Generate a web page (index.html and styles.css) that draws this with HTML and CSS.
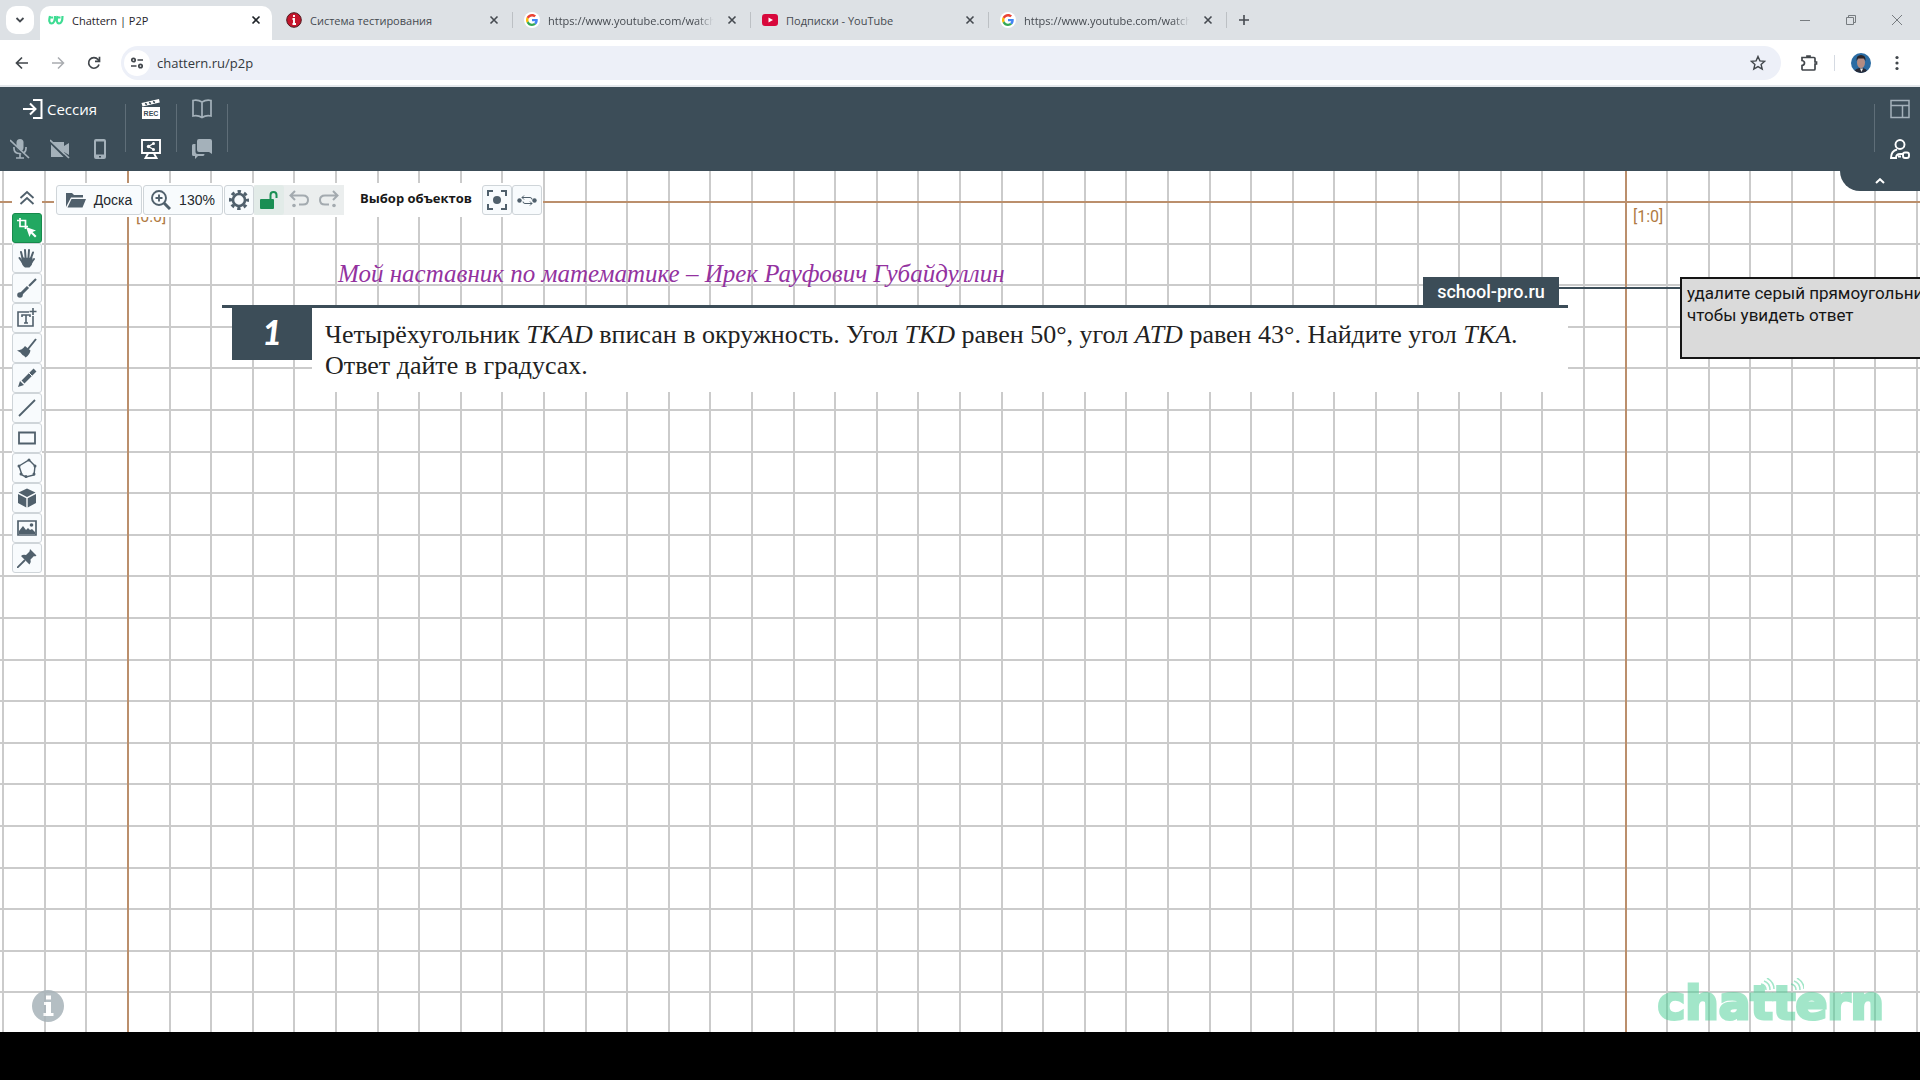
FILE: index.html
```html
<!DOCTYPE html>
<html lang="ru">
<head>
<meta charset="utf-8">
<title>Chattern | P2P</title>
<link rel="stylesheet" href="styles.css">
</head>
<body>
<svg class="defs" aria-hidden="true">
  <symbol id="x" viewBox="0 0 10 10"><path d="M1.5 1.5l7 7M8.5 1.5l-7 7" fill="none" stroke="currentColor" stroke-width="1.6"/></symbol>
  <symbol id="google" viewBox="0 0 48 48"><path fill="#ea4335" d="M24 9.5c3.5 0 6.700 1.200 9.200 3.600l6.900-6.900C35.900 2.400 30.500 0 24 0 14.600 0 6.500 5.400 2.600 13.200l8 6.200C12.400 13.700 17.700 9.500 24 9.500z"/><path fill="#4285f4" d="M47 24.500c0-1.600-.2-3.100-.4-4.500H24v9h12.900c-.6 3-2.300 5.500-4.800 7.200l7.700 6C44.400 38 47 31.800 47 24.500z"/><path fill="#fbbc05" d="M10.500 28.600c-.5-1.500-.8-3-.8-4.600s.3-3.100.8-4.600l-8-6.200C.9 16.500 0 20.100 0 24s.9 7.500 2.600 10.800z"/><path fill="#34a853" d="M24 48c6.500 0 11.900-2.100 15.900-5.800l-7.700-6c-2.200 1.500-4.900 2.300-8.200 2.300-6.300 0-11.600-4.200-13.500-9.900l-8 6.200C6.500 42.600 14.600 48 24 48z"/></symbol>
</svg>

<nav class="tabs" aria-label="Вкладки">
  <button class="tab-search" aria-label="Поиск вкладок"><svg width="10" height="10" viewBox="0 0 10 10"><path d="M1.500 3l3.500 3.500L8.500 3" fill="none" stroke="currentColor" stroke-width="1.800"/></svg></button>
  <div class="tab active">
    <svg class="fav" viewBox="0 0 16 16"><path d="M2 4q-2 7 1.500 7.500Q7 11.500 7 4M9.500 4q-2 7 1.500 7.500Q14.500 11.500 14.500 4M1 5.500h4M9 5.500h3.500" fill="none" stroke="#3fdc93" stroke-width="2.200"/></svg>
    <span class="tab-title">Chattern | P2P</span><button class="close" aria-label="Закрыть"><svg><use href="#x"/></svg></button>
  </div>
  <div class="tab">
    <svg class="fav" viewBox="0 0 16 16"><circle cx="8" cy="8" r="7.300" fill="#c4152c" stroke="#4e1a20"/><path d="M8 3v2M6.500 7H8v5M6.500 12h3.500" fill="none" stroke="#fff" stroke-width="1.900"/></svg>
    <span class="tab-title">Система тестирования</span><button class="close" aria-label="Закрыть"><svg><use href="#x"/></svg></button>
  </div>
  <div class="tab">
    <span class="fav round"><svg><use href="#google"/></svg></span>
    <span class="tab-title fade">https://www.youtube.com/watch</span><button class="close" aria-label="Закрыть"><svg><use href="#x"/></svg></button>
  </div>
  <div class="tab">
    <svg class="fav" viewBox="0 0 16 16"><rect y="2" width="16" height="12" rx="3" fill="#d8083c"/><path d="M6.500 5.500v5l4.500-2.500z" fill="#fff"/></svg>
    <span class="tab-title">Подписки - YouTube</span><button class="close" aria-label="Закрыть"><svg><use href="#x"/></svg></button>
  </div>
  <div class="tab">
    <span class="fav round"><svg><use href="#google"/></svg></span>
    <span class="tab-title fade">https://www.youtube.com/watch</span><button class="close" aria-label="Закрыть"><svg><use href="#x"/></svg></button>
  </div>
  <button class="new-tab" aria-label="Новая вкладка"><svg width="12" height="12" viewBox="0 0 12 12"><path d="M6 1v10M1 6h10" stroke="currentColor" stroke-width="1.600"/></svg></button>
  <div class="win">
    <button aria-label="Свернуть"><svg width="10" height="10" viewBox="0 0 10 10"><path d="M0 5.500h10" stroke="currentColor"/></svg></button>
    <button aria-label="Окно"><svg width="10" height="10" viewBox="0 0 10 10"><path d="M2.500 2V.5h7v7H8M.5 2.500h7v7h-7z" fill="none" stroke="currentColor"/></svg></button>
    <button aria-label="Закрыть окно"><svg width="10" height="10" viewBox="0 0 10 10"><path d="M0 0l10 10M10 0L0 10" stroke="currentColor"/></svg></button>
  </div>
</nav>

<div class="navbar">
  <button aria-label="Назад"><svg width="16" height="16" viewBox="0 0 16 16"><path d="M14 8H3M8 2.500L2.500 8 8 13.500" fill="none" stroke="currentColor" stroke-width="1.700"/></svg></button>
  <button class="off" aria-label="Вперёд"><svg width="16" height="16" viewBox="0 0 16 16"><path d="M2 8h11M8 2.500L13.500 8 8 13.500" fill="none" stroke="currentColor" stroke-width="1.500"/></svg></button>
  <button aria-label="Обновить"><svg width="16" height="16" viewBox="0 0 16 16"><path d="M13 9.500A5.300 5.300 0 1 1 12 4.500L13.500 6M13.500 1.800V6.300H9" fill="none" stroke="currentColor" stroke-width="1.700"/></svg></button>
  <div class="omnibox">
    <span class="site"><svg width="14" height="14" viewBox="0 0 14 14"><g fill="none" stroke="currentColor" stroke-width="1.700"><circle cx="3.500" cy="4" r="1.700"/><path d="M7.500 4H13M1 10h5.500"/><circle cx="10.500" cy="10" r="1.700"/></g></svg></span>
    <input class="url" aria-label="Адрес" value="chattern.ru/p2p">
    <button aria-label="Закладка"><svg width="16" height="16" viewBox="0 0 16 16"><path d="M8 1.500l1.900 4.400 4.800.4-3.600 3.100 1.100 4.700L8 11.600l-4.200 2.500 1.100-4.700L1.300 6.300l4.800-.4z" fill="none" stroke="currentColor" stroke-width="1.400"/></svg></button>
  </div>
  <div class="nav-right">
    <button aria-label="Расширения"><svg width="18" height="18" viewBox="0 0 18 18"><path d="M2 3.500h12q1 0 1 1v3.500h1.500v2H15v5q0 1-1 1H3q-1 0-1-1v-3.500q2.500-.5 2.500-2.500T2 6.500zM7 3.500V2h3v1.500" fill="none" stroke="currentColor" stroke-width="1.700"/></svg></button>
    <i></i>
    <button class="profile" aria-label="Профиль"><svg width="20" height="20" viewBox="0 0 20 20"><clipPath id="av"><circle cx="10" cy="10" r="10"/></clipPath><g clip-path="url(#av)"><path fill="#2b6ca3" d="M0 0h20v20H0z"/><path fill="#272b38" d="M2 20q2-5 8-5t7 5z"/><ellipse cx="10" cy="9.500" rx="4" ry="5.500" fill="#b48c82"/><path fill="#2a2529" d="M5.500 8Q5 2 10 2t4.500 6L13 5.500H7z"/><path fill="#eee" d="M9 15.500l1.500 3.500 1.500-3.500z"/></g></svg></button>
    <button aria-label="Меню"><svg width="4" height="16" viewBox="0 0 4 16"><g fill="currentColor"><circle cx="2" cy="2.500" r="1.600"/><circle cx="2" cy="8" r="1.600"/><circle cx="2" cy="13.500" r="1.600"/></g></svg></button>
  </div>
</div>

<header class="app">
  <div class="group session">
    <button class="enter"><svg class="ic" viewBox="0 0 20 20"><path d="M0 10h12M7 4.500l5.500 5.500L7 15.500M10 1h8.500v18H10" fill="none" stroke="currentColor" stroke-width="2"/></svg>Сессия</button>
    <div class="trio">
      <button class="dim" aria-label="Микрофон"><svg class="ic" viewBox="0 0 20 20"><rect x="6.500" y="0" width="7" height="12" rx="3.500" fill="currentColor"/><path d="M4 8v1.500q0 5 6 5t6-5V8M10 14v5M6 19h8" fill="none" stroke="currentColor" stroke-width="1.700"/><path d="M0 2l18 18" stroke="#3c4d58" stroke-width="2"/><path d="M0 1l19 18" stroke="currentColor" stroke-width="1.700"/></svg></button>
      <button class="dim" aria-label="Камера"><svg class="ic" viewBox="0 0 20 20"><path fill="currentColor" d="M1 3h13v4l5-3v12l-5-3v5H1z"/><path d="M0 3l17 17" stroke="#3c4d58" stroke-width="2"/><path d="M0 1l19 18" stroke="currentColor" stroke-width="1.700"/></svg></button>
      <button class="dim" aria-label="Телефон"><svg class="ic" viewBox="0 0 20 20"><path fill="currentColor" fill-rule="evenodd" d="M6 0h8q2 0 2 2v16q0 2-2 2H6q-2 0-2-2V2q0-2 2-2zm0 2.500v13h8v-13zM9 17v1.500h2V17z"/></svg></button>
    </div>
  </div>
  <div class="group">
    <button aria-label="Запись"><svg class="ic" viewBox="0 0 20 20"><path fill="currentColor" d="M.5 4L18 0l.8 3.500L1.500 7.500zM1 8h18v12H1z"/><path d="M4 4.500l2 1M8 3.500l2 1M12 2.500l2 1" stroke="#3c4d58" stroke-width="1.500"/><text class="rec" x="10" y="17" text-anchor="middle">REC</text></svg></button>
    <button aria-label="Демонстрация экрана"><svg class="ic" viewBox="0 0 20 20"><path d="M1 1h18v13H1zM7 14.500L4.500 19h11L13 14.500" fill="none" stroke="currentColor" stroke-width="1.900"/><path d="M12.500 4.500L7.500 7.500l5 3" fill="none" stroke="currentColor" stroke-width="1.300"/><g fill="currentColor"><circle cx="12.500" cy="4.500" r="1.500"/><circle cx="7.500" cy="7.500" r="1.700"/><circle cx="12.500" cy="10.500" r="1.500"/></g></svg></button>
  </div>
  <div class="group">
    <button class="dim" aria-label="Книга"><svg class="ic" viewBox="0 0 20 20"><path d="M10 3Q6 .5 1 1.500V17q5-1 9 1.500Q14 16 19 17V1.500Q14 .5 10 3zM10 3v15.500" fill="none" stroke="currentColor" stroke-width="1.700"/></svg></button>
    <button class="dim" aria-label="Чат"><svg class="ic" viewBox="0 0 20 20"><path fill="currentColor" d="M7 0h11q2 0 2 2v13l-3-2H7q-2 0-2-2V2q0-2 2-2zM1.500 5H3.500v8q0 2 2 2h7q0 2-1.500 2H6l-3 3v-3H1.500Q0 17 0 15.500v-9Q0 5 1.500 5z"/></svg></button>
  </div>
  <div class="group right">
    <button class="dim" aria-label="Макет"><svg class="ic" viewBox="0 0 20 20"><path d="M1 1.500h18v17H1zM1 6.500h18M12.500 6.500v12" fill="none" stroke="currentColor" stroke-width="1.500"/></svg></button>
    <button aria-label="Участник"><svg class="ic" viewBox="0 0 20 20"><g fill="none" stroke="currentColor" stroke-width="1.900"><circle cx="10" cy="5.500" r="4.500"/><path d="M7 19H1q0-7 6-8.500M6 19q0-4 4-4h4M11 17.500H8"/><rect x="13" y="13.500" width="6" height="5.500" rx="2"/></g></svg></button>
  </div>
  <button class="collapse" aria-label="Свернуть панель"><svg width="10" height="6" viewBox="0 0 10 6"><path d="M1 5l4-3.800L9 5" fill="none" stroke="currentColor" stroke-width="2"/></svg></button>
</header>

<main class="board">
  <div class="axis row"></div><div class="axis col first"></div><div class="axis col second"></div>
  <span class="coord c00">[0:0]</span><span class="coord c10">[1:0]</span>
  <p class="mentor">Мой наставник по математике – Ирек Рауфович Губайдуллин</p>
  <span class="brand-line"></span>
  <span class="brand">school-pro.ru</span>
  <article class="task">
    <div class="num">1</div>
    <p>Четырёхугольник <em>TKAD</em> вписан в окружность. Угол <em>TKD</em> равен 50°, угол <em>ATD</em> равен 43°. Найдите угол <em>TKA</em>.<br>Ответ дайте в градусах.</p>
  </article>
  <div class="answer">удалите серый прямоугольник,<br>чтобы увидеть ответ</div>

  <div class="tools-top">
    <button class="labelled folder"><svg class="ic" viewBox="0 0 20 20"><path fill="currentColor" d="M0 17V3h6l2 2h9v2.500H5zM1.500 17.500L5.500 9H20l-3.500 8.500z"/></svg>Доска</button>
    <button class="labelled zoom"><svg class="ic" viewBox="0 0 20 20"><g fill="none" stroke="currentColor" stroke-width="1.900"><circle cx="8" cy="8" r="7"/><path d="M8 4.500v7M4.500 8h7"/><path d="M13 13l6 6" stroke-width="3"/></g></svg>130%</button>
    <button aria-label="Настройки"><svg class="ic" viewBox="0 0 20 20"><g fill="none" stroke="currentColor"><circle cx="10" cy="10" r="6" stroke-width="2.600"/><circle cx="10" cy="10" r="8.500" stroke-width="3" stroke-dasharray="3.400 3.276" stroke-dashoffset="1.700"/></g></svg></button>
    <div class="flat">
      <button class="lock" aria-label="Замок"><svg class="ic" viewBox="0 0 20 20"><rect x="1" y="9" width="14" height="10" rx="1" fill="currentColor"/><path d="M11.500 9V5q0-3 3-3t3 3v3" fill="none" stroke="currentColor" stroke-width="2"/></svg></button>
      <button aria-label="Отменить"><svg class="ic" viewBox="0 0 20 20"><path d="M2 5.500h12q5 0 5 4.500t-5 4.500h-4M6 1L1.500 5.500 6 10" fill="none" stroke="currentColor" stroke-width="2"/><circle cx="5" cy="15.500" r="1.800" fill="currentColor"/></svg></button>
      <button aria-label="Повторить"><svg class="ic" viewBox="0 0 20 20"><path d="M18 5.500H6q-5 0-5 4.500t5 4.500h4M14 1l4.500 4.500L14 10" fill="none" stroke="currentColor" stroke-width="2"/><circle cx="15" cy="15.500" r="1.800" fill="currentColor"/></svg></button>
    </div>
    <strong>Выбор объектов</strong>
    <button aria-label="Фокус"><svg class="ic" viewBox="0 0 20 20"><path d="M1 6V1h5M14 1h5v5M19 14v5h-5M6 19H1v-5" fill="none" stroke="currentColor" stroke-width="2"/><circle cx="10" cy="10" r="4" fill="currentColor"/></svg></button>
    <button aria-label="Соединить"><svg class="ic" viewBox="0 0 20 20"><g fill="currentColor"><circle cx="2.500" cy="10.500" r="2.200"/><circle cx="17.500" cy="10.500" r="2.200"/></g><path d="M5 7.500h8q2 0 2 2M7 5.500L5 7.500 7 9.500M15 13.500H8q-2 0-2-2M13 11.500l2 2-2 2" fill="none" stroke="currentColor"/></svg></button>
  </div>

  <div class="tools-left">
    <button class="up" aria-label="Свернуть инструменты"><svg width="16" height="16" viewBox="0 0 16 16"><path d="M1.500 8L8 2l6.500 6M1.500 14L8 8l6.500 6" fill="none" stroke="currentColor" stroke-width="1.800"/></svg></button>
    <button class="on" aria-label="Выбор"><svg class="ic" viewBox="0 0 20 20"><path d="M3 0v8.500h8M0 2.500h8.500V11" fill="none" stroke="currentColor" stroke-width="1.700"/><path fill="currentColor" d="M9 9l10 3.500-3.500 1.500 4 4-1.500 1.500-4-4-1.500 3.500z"/></svg></button>
    <button aria-label="Рука"><svg class="ic" viewBox="0 0 20 20"><path d="M5.500 10L4 4M8.500 9L8 2M11.500 9L12 2M14 10l2-5.500M6 15l-3.500-5M14 15l3-4" stroke="currentColor" stroke-width="2" stroke-linecap="round"/><path fill="currentColor" d="M4.500 9.500h11V14q0 3-3 5.500H8Q4.500 17 4.500 13z"/></svg></button>
    <button aria-label="Кисть"><svg class="ic" viewBox="0 0 20 20"><path d="M19 1l-7 7" stroke="currentColor" stroke-width="2.200"/><path d="M11 9l-7 7" stroke="currentColor" stroke-width="3"/><circle cx="3" cy="17" r="2.800" fill="currentColor"/></svg></button>
    <button aria-label="Текст"><svg class="ic" viewBox="0 0 20 20"><path d="M12 4H1v14h15V8M16 0v7M12.500 3.500h7M5 9V7h8v2M9 7v8M7 15h4" fill="none" stroke="currentColor" stroke-width="1.600"/></svg></button>
    <button aria-label="Очистить"><svg class="ic" viewBox="0 0 20 20"><path d="M19 1l-8 10" stroke="currentColor" stroke-width="2"/><path fill="currentColor" d="M8 8l5.500 4.500q-1 4.500-5 7-1-2-3-2.500Q4 14 0 12.500 5.500 12 8 8z"/></svg></button>
    <button aria-label="Карандаш"><svg class="ic" viewBox="0 0 20 20"><path d="M18 2L6 14" stroke="currentColor" stroke-width="4"/><path fill="currentColor" d="M1 19l2-6 4 4z"/><path d="M12 5l3 3" stroke="#f7fafc"/></svg></button>
    <button aria-label="Линия"><svg class="ic" viewBox="0 0 20 20"><path d="M2 18L18 2" stroke="currentColor" stroke-width="1.800"/></svg></button>
    <button aria-label="Прямоугольник"><svg class="ic" viewBox="0 0 20 20"><path d="M2 4.500h16v11H2z" fill="none" stroke="currentColor" stroke-width="1.800"/></svg></button>
    <button aria-label="Многоугольник"><svg class="ic" viewBox="0 0 20 20"><path d="M2 8l10-6 6 6-1 9-8 2-4-2z" fill="none" stroke="currentColor" stroke-width="1.400"/><g fill="currentColor"><circle cx="2" cy="8" r="1.500"/><circle cx="12" cy="2" r="1.500"/><circle cx="18" cy="8" r="1.500"/><circle cx="17" cy="16" r="1.500"/><circle cx="9" cy="18.500" r="1.500"/><circle cx="4" cy="16" r="1.500"/></g></svg></button>
    <button aria-label="Куб"><svg class="ic" viewBox="0 0 20 20"><path fill="currentColor" d="M10 .5l8.500 4L10 9 1.500 4.500zM1 6l8.300 4.300V19.500L1 15zM19 6l-8.300 4.300V19.500L19 15z"/></svg></button>
    <button aria-label="Изображение"><svg class="ic" viewBox="0 0 20 20"><path d="M1 3h18v14H1z" fill="none" stroke="currentColor" stroke-width="1.700"/><path fill="currentColor" d="M2 16v-3l4-5 3 4 2-2 2 2 2-1 3 3v2z"/><circle cx="14.500" cy="7" r="1.800" fill="currentColor"/></svg></button>
    <button aria-label="Закрепить"><svg class="ic" viewBox="0 0 20 20"><path d="M0 20l8-8" stroke="currentColor" stroke-width="1.800"/><path fill="currentColor" d="M13 1l6.500 6.500-1.500 1-1-.500-3.500 3.500q1 3-1 5L4 8q2-2 5-1l3.500-3.500z"/></svg></button>
  </div>

  <button class="info" aria-label="Информация"><svg width="32" height="32" viewBox="0 0 32 32"><circle cx="16" cy="16" r="16" fill="#a8b3b9"/><path d="M14 5.500h5v4h-5zM12 12h7v11h2.500v3h-10v-3H14v-8h-2z" fill="#fff"/></svg></button>
  <div class="logo">chattern<svg width="44" height="14" viewBox="0 0 44 14"><path d="M1 6q5 1 5 6M4 3q6 2 6 9M7 0q7 4 7 11M31 6q5 1 5 6M34 3q6 2 6 9M37 0q7 4 7 11" fill="none" stroke="currentColor" stroke-width="1.500"/></svg></div>
</main>
<footer class="letterbox"></footer>
</body>
</html>
```
FILE: styles.css
```css
* { box-sizing: border-box; }
body {
  margin: 0;
  min-height: 100vh;
  display: flex;
  flex-direction: column;
  overflow: hidden;
  font-family: "Open Sans", "Noto Sans", sans-serif;
  color: #1f2429;
}
button {
  margin: 0;
  padding: 0;
  border: 0;
  background: none;
  color: inherit;
  font: inherit;
  display: flex;
  align-items: center;
  justify-content: center;
}
svg { display: block; }
p { margin: 0; }
.defs { position: absolute; width: 0; height: 0; }
.ic { width: 20px; height: 20px; flex: none; }

/* Browser tabs */
.tabs {
  height: 40px;
  padding-left: 6px;
  background: #dde1e5;
  display: flex;
  align-items: flex-end;
  color: #454a50;
}
.tab-search {
  width: 28px;
  height: 28px;
  margin: 0 6px 6px 0;
  border-radius: 10px;
  background: #fff;
}
.tab {
  width: 238px;
  height: 34px;
  padding: 0 12px 6px 11px;
  display: flex;
  align-items: center;
  gap: 8px;
  font-size: 11px;
  position: relative;
}
.tab:not(.active)::after {
  content: "";
  position: absolute;
  right: 0;
  top: 6px;
  width: 1px;
  height: 16px;
  background: #bcc0c4;
}
.tab.active {
  width: 232px;
  margin-right: 3px;
  padding: 0 9px 6px 8px;
  border-radius: 10px 10px 0 0;
  background: #fff;
  color: #1f2429;
}
.fav { width: 16px; height: 16px; flex: none; }
.round { border-radius: 50%; background: #fff; padding: 2px; }
.round svg { width: 12px; height: 12px; }
.tab-title {
  flex: 1;
  overflow: hidden;
  white-space: nowrap;
}
.fade {
  -webkit-mask-image: linear-gradient(90deg, #000 88%, transparent 98%);
  mask-image: linear-gradient(90deg, #000 88%, transparent 98%);
}
.close { width: 14px; height: 14px; }
.close svg { width: 10px; height: 10px; }
.new-tab { width: 28px; height: 28px; margin: 0 0 6px 3px; }
.win {
  margin-left: auto;
  height: 40px;
  display: flex;
  color: #777c80;
}
.win button { width: 46px; }

/* Address bar */
.navbar {
  height: 47px;
  padding: 0 12px 0 4px;
  border-bottom: 2px solid #e4e8ec;
  background: #fff;
  display: flex;
  align-items: center;
  color: #41464b;
}
.navbar > button { width: 36px; height: 36px; }
.navbar > .off { color: #a9acb0; }
.omnibox {
  flex: 1;
  height: 34px;
  margin-left: 9px;
  padding: 0 15px 0 3px;
  border-radius: 17px;
  background: #edf0f8;
  display: flex;
  align-items: center;
  gap: 7px;
}
.site {
  width: 26px;
  height: 26px;
  border-radius: 50%;
  background: #fff;
  display: flex;
  align-items: center;
  justify-content: center;
}
.url {
  flex: 1;
  padding: 0;
  border: 0;
  background: none;
  font: 13px "Open Sans", sans-serif;
  color: #33383d;
}
.nav-right {
  width: 127px;
  padding: 0 8px 0 19px;
  display: flex;
  align-items: center;
  gap: 16px;
}
.nav-right i { width: 1px; height: 16px; background: #d5dae2; }
.profile { margin-right: 8px; }

/* Application header */
.app {
  position: relative;
  z-index: 1;
  height: 84px;
  padding: 0 5px 0 5px;
  background: #3c4d58;
  display: flex;
  align-items: center;
  color: #fff;
}
.group {
  position: relative;
  width: 51px;
  height: 84px;
  padding: 12px 2px 12px 0;
  display: flex;
  flex-direction: column;
  justify-content: space-between;
  align-items: center;
}
.group::after {
  content: "";
  position: absolute;
  right: 0;
  top: 17px;
  width: 1px;
  height: 48px;
  background: #5f6e78;
}
.session { width: 121px; align-items: flex-start; }
.app .ic { height: 20px; }
.group button { height: 20px; }
.enter { padding-left: 18px; gap: 4px; font-size: 15px; }
.trio { display: flex; gap: 20px; padding-left: 5px; }
.dim { color: #a4b1ba; }
.rec { font: bold 7px "Liberation Sans", sans-serif; fill: #3c4d58; }
.right { margin-left: auto; width: 41px; align-items: flex-end; padding-right: 5px; }
.right::after { right: auto; left: 0; }
.collapse {
  position: absolute;
  right: 0;
  top: 84px;
  width: 80px;
  height: 20px;
  border-radius: 0 0 0 20px;
  background: #3c4d58;
}

/* Board: five cells make up one 208px tile */
.board {
  position: relative;
  flex: 1;
  overflow: hidden;
  background-color: #fff;
  background-image:
    linear-gradient(90deg, #cbcbcb 2px, transparent 2px 42px, #cbcbcb 42px 44px, transparent 44px 83px, #cbcbcb 83px 85px, transparent 85px 125px, #cbcbcb 125px 127px, transparent 127px 166px, #cbcbcb 166px 168px, transparent 168px),
    linear-gradient(#cbcbcb 2px, transparent 2px 42px, #cbcbcb 42px 44px, transparent 44px 83px, #cbcbcb 83px 85px, transparent 85px 125px, #cbcbcb 125px 127px, transparent 127px 166px, #cbcbcb 166px 168px, transparent 168px);
  background-size: 208px 208px;
  background-position: 127px 30px;
}
.axis { position: absolute; background: #bb8f6c; }
.axis.row { left: 0; right: 0; top: 30px; height: 2px; }
.axis.col { top: 0; bottom: 0; width: 2px; }
.first { left: 127px; }
.second { left: 1625px; }
.coord {
  position: absolute;
  top: 35px;
  font: 16px/22px Roboto, sans-serif;
  color: #b07a43;
}
.c00 { left: 136px; }
.c10 { left: 1633px; }
.mentor {
  position: absolute;
  left: 338px;
  top: 87px;
  font: italic 25px/32px "Liberation Serif", serif;
  color: #93329f;
  white-space: nowrap;
}
.brand {
  position: absolute;
  left: 1423px;
  top: 106px;
  width: 136px;
  background: #3c4d58;
  color: #fff;
  font: 500 18px/30px Roboto, sans-serif;
  text-align: center;
}
.brand-line {
  position: absolute;
  left: 1559px;
  top: 116px;
  width: 121px;
  height: 2px;
  background: #3c4d58;
}
.task {
  position: absolute;
  left: 222px;
  top: 134px;
  width: 1346px;
  padding-left: 10px;
  border-top: 3px solid #3c4d58;
  display: flex;
  align-items: flex-start;
}
.num {
  width: 80px;
  height: 52px;
  background: #3c4d58;
  color: #fff;
  font: italic 900 34px/48px Lato, sans-serif;
  text-align: center;
}
.task p {
  flex: 1;
  height: 84px;
  padding: 11px 0 0 13px;
  background: #fff;
  font: 26px/31px "Liberation Serif", serif;
  color: #222;
  white-space: nowrap;
}
.answer {
  position: absolute;
  left: 1680px;
  top: 106px;
  width: 300px;
  height: 82px;
  padding: 3px 5px;
  border: 2px solid #151515;
  background: #dadada;
  font: 17px/22px Roboto, sans-serif;
  color: #151515;
  white-space: nowrap;
}

/* Board tools */
.tools-top, .tools-left { position: absolute; display: flex; background: #fff; color: #50606c; }
.tools-top {
  left: 54px;
  top: 12px;
  padding: 2px 1px 2px 2px;
}
.tools-top button, .tools-left button {
  width: 30px;
  height: 30px;
  border: 1px solid #cfd5d9;
  border-radius: 3px;
  background: #f8fbfd;
}
.tools-top .labelled {
  gap: 8px;
  font: 14px "Liberation Sans", sans-serif;
  color: #24292d;
  margin-right: 1px;
}
.labelled .ic { color: #50606c; }
.tools-top .folder { width: 86px; }
.tools-top .zoom { width: 80px; }
.flat { display: flex; background: #ebeeee; }
.tools-top .flat button { border: 0; background: none; color: #a3aaaf; }
.tools-top .flat .lock { color: #1a8f54; background: #e2ebe8; }
.tools-top strong {
  width: 138px;
  padding-left: 6px;
  text-align: center;
  font-size: 13px;
  line-height: 26px;
  color: #181818;
}
.tools-left {
  left: 12px;
  top: 12px;
  flex-direction: column;
}
.tools-left .up { border: 0; background: none; }
.tools-left .on { background: #22a861; border-color: #178a4c; color: #fff; }
.info { position: absolute; left: 32px; bottom: 10px; opacity: .85; }
.logo {
  position: absolute;
  right: 36px;
  bottom: 2px;
  font: bold 47px/54px "DejaVu Sans", sans-serif;
  color: #48cf94;
  -webkit-text-stroke: 3px #48cf94;
  opacity: .5;
}
.logo svg { position: absolute; left: 102px; top: 2px; }
.letterbox { height: 48px; background: #000; }
```
